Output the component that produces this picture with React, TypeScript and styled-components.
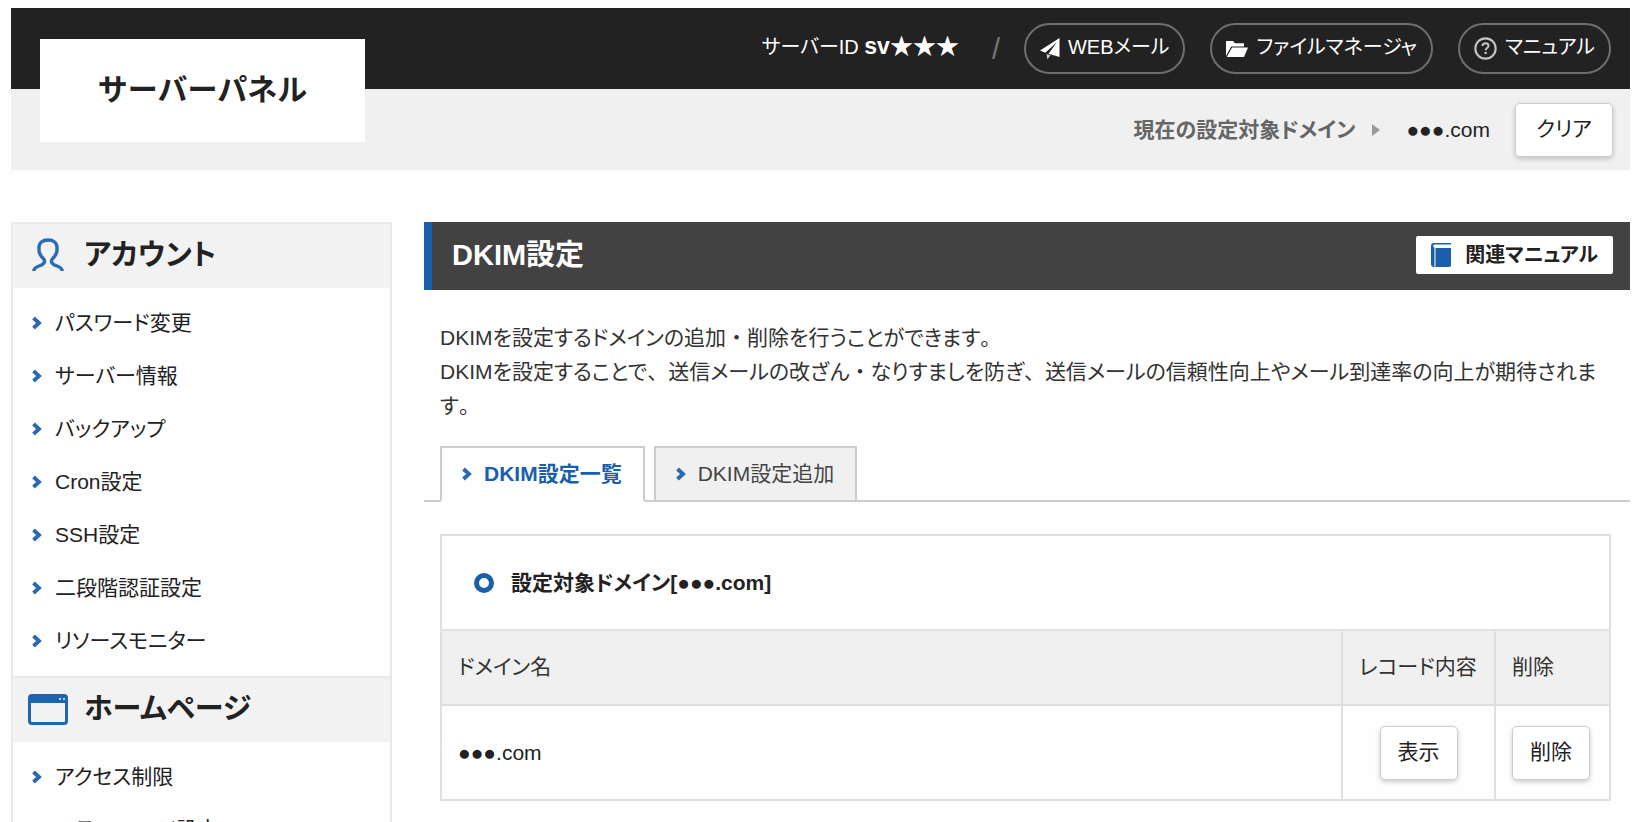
import React from "react";
import styled, { createGlobalStyle, css } from "styled-components";

const color = {
  ink: "#222222",
  text: "#333333",
  blue: "#1a5fac",
  bar: "#424242",
  panel: "#f0f0f0",
  line: "#e0e0e0",
};

const GlobalStyle = createGlobalStyle`
  *, *::before, *::after { box-sizing: border-box; }
  body {
    margin: 0;
    background: #fefefe;
    color: ${color.ink};
    font-family: "Liberation Sans", "Noto Sans CJK JP", sans-serif;
    font-size: 21px;
    line-height: 34px;
    font-feature-settings: "palt";
  }
  h1, h2, p, ul { margin: 0; padding: 0; font-size: inherit; }
  ul { list-style: none; }
  a { color: inherit; text-decoration: none; }
  button { font: inherit; color: inherit; cursor: pointer; }
  svg { display: block; flex: none; }
`;

const Page = styled.div`
  padding: 8px 10px 0 11px;
`;

const Header = styled.header`
  position: relative;
  margin-bottom: 52px;
`;

const Logo = styled.a`
  position: absolute;
  top: 31px;
  left: 29px;
  width: 325px;
  height: 103px;
  display: flex;
  align-items: center;
  justify-content: center;
  padding-bottom: 8px;
  background: #ffffff;
  font-family: "Noto Sans CJK JP", sans-serif;
  font-size: 30px;
  font-weight: 700;
  font-feature-settings: normal;
`;

const TopBar = styled.div`
  display: flex;
  align-items: center;
  justify-content: flex-end;
  height: 81px;
  padding-right: 19px;
  background: ${color.ink};
  color: #ffffff;
  font-size: 20px;
`;

const ServerId = styled.p`
  padding-bottom: 4px;

  strong { font-size: 23px; }
`;

const Slash = styled.span`
  margin: 0 24px 0 33px;
  color: #777777;
  font-size: 29px;
`;

const Pills = styled.nav`
  display: flex;
  gap: 25px;
`;

const Pill = styled.a`
  display: flex;
  align-items: center;
  gap: 8px;
  height: 51px;
  padding: 0 14px 4px;
  border: 2px solid #6e6e6e;
  border-radius: 26px;

  svg { margin-top: 4px; }
`;

const DomainBar = styled.div`
  display: flex;
  align-items: center;
  justify-content: flex-end;
  height: 81px;
  padding: 0 17px 0 0;
  background: ${color.panel};
`;

const DomainLabel = styled.span`
  color: #666666;
  font-weight: 700;
`;

const Triangle = styled.span`
  margin: 0 26px 0 17px;
  border: 6px solid transparent;
  border-left: 8px solid #999999;
  border-right: 0;
`;

const Button = styled.button<{ $wide?: boolean }>`
  height: 54px;
  padding: 0 17px 2px;
  ${(p) => p.$wide && css`
    min-width: 98px;
    margin-left: 25px;
  `}
  border: 1px solid #cccccc;
  border-radius: 5px;
  background: #ffffff;
  box-shadow: 0 2px 5px rgba(0, 0, 0, 0.2);
`;

const Columns = styled.div`
  display: flex;
  align-items: flex-start;
  gap: 32px;
`;

const Sidebar = styled.nav`
  flex: none;
  width: 381px;
  border: 2px solid #e9e9e9;
  border-width: 0 2px 2px;
`;

const SideHeading = styled.h2`
  display: flex;
  align-items: center;
  height: 66px;
  padding: 0 15px 2px;
  border-top: 2px solid #e9e9e9;
  background: #f2f2f2;
  font-size: 29px;
`;

const HeadingIcon = styled.span`
  display: flex;
  justify-content: center;
  width: 40px;
  margin-right: 16px;
`;

const SideList = styled.ul`
  padding: 8px 0 9px;
`;

const SideLink = styled.a`
  display: flex;
  align-items: center;
  gap: 13px;
  height: 53px;
  padding-left: 19px;
`;

const Main = styled.main`
  flex: 1;
  min-width: 0;
`;

const TitleBar = styled.div`
  display: flex;
  align-items: center;
  justify-content: space-between;
  height: 68px;
  padding: 0 17px 2px 20px;
  border-left: 8px solid ${color.blue};
  background: ${color.bar};
`;

const Title = styled.h1`
  color: #ffffff;
  font-size: 29px;
`;

const ManualLink = styled.a`
  display: flex;
  align-items: center;
  gap: 14px;
  height: 38px;
  padding: 0 15px;
  border-radius: 2px;
  background: #ffffff;
  font-size: 20px;
  font-weight: 700;
`;

const Description = styled.p`
  padding: 31px 16px 23px;
  color: ${color.text};
`;

const FullWidth = styled.span`
  font-feature-settings: normal;
`;

const Tabs = styled.nav`
  display: flex;
  gap: 9px;
  padding-left: 16px;
  border-bottom: 2px solid #cccccc;
`;

const Tab = styled.a<{ $active?: boolean }>`
  display: flex;
  align-items: center;
  gap: 12px;
  height: 56px;
  margin-bottom: -2px;
  padding: 0 21px 0 20px;
  border: 2px solid #cccccc;
  background: ${color.panel};
  color: #444444;
  ${(p) => p.$active && css`
    border-bottom-color: #fefefe;
    background: #fefefe;
    color: ${color.blue};
    font-weight: 700;
  `}
`;

const TableWrap = styled.div`
  padding: 32px 19px 0 16px;
`;

const DomainTable = styled.table`
  width: 100%;
  border: 2px solid ${color.line};
  border-collapse: collapse;
  table-layout: fixed;
`;

const CaptionCell = styled.th`
  height: 95px;
  padding: 0 32px;
  text-align: left;
`;

const CaptionInner = styled.span`
  display: flex;
  align-items: center;
  gap: 17px;
`;

const Ring = styled.span`
  width: 20px;
  height: 20px;
  border: 5px solid ${color.blue};
  border-radius: 50%;
`;

const HeadCell = styled.th`
  height: 75px;
  padding: 0 16px 2px;
  border: 2px solid ${color.line};
  background: ${color.panel};
  color: ${color.text};
  font-weight: 400;
  text-align: left;
  white-space: nowrap;
`;

const Cell = styled.td<{ $center?: boolean }>`
  height: 95px;
  padding: 0 16px;
  border: 2px solid ${color.line};
  text-align: ${(p) => (p.$center ? "center" : "left")};
`;

const Chevron = () => (
  <svg width="10" height="14" viewBox="0 0 10 14" aria-hidden="true">
    <path d="M1.5 2l5.5 5-5.5 5" fill="none" stroke="#2a68b3" strokeWidth="3.8" />
  </svg>
);

const PlaneIcon = () => (
  <svg width="20" height="22" viewBox="0 0 20 22" aria-hidden="true">
    <path d="M19.500 0L0 12.500l5.300 2.300L17 4 8.500 15.800 19.500 19z" fill="#fff" />
    <path d="M6.500 16l.9 5.500 3.100-4.300z" fill="#ccc" />
  </svg>
);

const FolderIcon = () => (
  <svg width="22" height="18" viewBox="0 0 22 18" aria-hidden="true">
    <path d="M0 16V1h7l2 2.200h9v3.300H5.200z" fill="#fff" />
    <path d="M6 7.500h16l-4 9.500H.8z" fill="#fff" />
  </svg>
);

const HelpIcon = () => (
  <svg width="23" height="23" viewBox="0 0 24 24" aria-hidden="true">
    <circle cx="12" cy="12" r="10.600" fill="none" stroke="#c4c4c4" strokeWidth="2.200" />
    <path d="M8.800 9.400c.2-1.900 1.400-2.800 3.200-2.800s3.200 1 3.200 2.600c0 2.200-3 2.300-3 4.600" fill="none" stroke="#c4c4c4" strokeWidth="2" />
    <rect x="11" y="15.500" width="2.300" height="2.300" fill="#c4c4c4" />
  </svg>
);

const PersonIcon = () => (
  <svg width="32" height="34" viewBox="0 0 32 34" aria-hidden="true">
    <path
      d="M1.800 33C2 30 4 29 7 28c6.500-2 6.500-5.500 3.800-8C8.500 17.500 7 15.500 7 12.500V9.500C7 5 10.500 2 16 2s9 3 9 7.500v3c0 3-1.500 5-3.800 7.500-2.700 2.500-2.700 6 3.800 8 3 1 5 2 5.200 5"
      fill="none"
      stroke="#2a6bb5"
      strokeWidth="3.400"
    />
  </svg>
);

const WindowIcon = () => (
  <svg width="40" height="31" viewBox="0 0 40 31" aria-hidden="true">
    <rect x="1.500" y="1.500" width="37" height="28" rx="2.500" fill="#f2f2f2" stroke="#1f64af" strokeWidth="3" />
    <path d="M1 2h38v7H1z" fill="#1f64af" />
    <path d="M31 5h2M35 5h2" stroke="#c5d6ea" strokeWidth="2" />
  </svg>
);

const BookIcon = () => (
  <svg width="20" height="24" viewBox="0 0 20 24" aria-hidden="true">
    <path d="M3 0h17v1.400H3.500C2 1.400 2 4.500 3.500 4.500V24H3c-2 0-3-1-3-3V3c0-2 1-3 3-3z" fill="#1a5fac" />
    <path d="M4.500 5H20v17c0 1.300-.7 2-2 2H4.500z" fill="#1a5fac" />
    <path d="M3.800 5v18" stroke="#8fb2d8" strokeWidth="1" />
  </svg>
);

/* Keeps Japanese punctuation at its full em width inside proportional text. */
const Prose = ({ text }: { text: string }) => (
  <>
    {text
      .split(/([、。・])/)
      .map((part, i) => (i % 2 ? <FullWidth key={i}>{part}</FullWidth> : part))}
  </>
);

const sections = [
  {
    title: "アカウント",
    icon: <PersonIcon />,
    items: [
      "パスワード変更",
      "サーバー情報",
      "バックアップ",
      "Cron設定",
      "SSH設定",
      "二段階認証設定",
      "リソースモニター",
    ],
  },
  {
    title: "ホームページ",
    icon: <WindowIcon />,
    items: ["アクセス制限", "エラーページ設定"],
  },
];

export default function App() {
  return (
    <>
      <GlobalStyle />
      <Page>
        <Header>
          <TopBar>
            <ServerId>
              サーバーID <strong>sv★★★</strong>
            </ServerId>
            <Slash>/</Slash>
            <Pills>
              <Pill href="#webmail">
                <PlaneIcon />
                WEBメール
              </Pill>
              <Pill href="#files">
                <FolderIcon />
                ファイルマネージャ
              </Pill>
              <Pill href="#manual">
                <HelpIcon />
                マニュアル
              </Pill>
            </Pills>
          </TopBar>
          <DomainBar>
            <DomainLabel>現在の設定対象ドメイン</DomainLabel>
            <Triangle />
            <span>●●●.com</span>
            <Button type="button" $wide>クリア</Button>
          </DomainBar>
          <Logo href="#top">サーバーパネル</Logo>
        </Header>
        <Columns>
          <Sidebar>
            {sections.map((section) => (
              <section key={section.title}>
                <SideHeading>
                  <HeadingIcon>{section.icon}</HeadingIcon>
                  {section.title}
                </SideHeading>
                <SideList>
                  {section.items.map((item) => (
                    <li key={item}>
                      <SideLink href="#">
                        <Chevron />
                        {item}
                      </SideLink>
                    </li>
                  ))}
                </SideList>
              </section>
            ))}
          </Sidebar>
          <Main>
            <TitleBar>
              <Title>DKIM設定</Title>
              <ManualLink href="#related">
                <BookIcon />
                関連マニュアル
              </ManualLink>
            </TitleBar>
            <Description>
              <Prose text="DKIMを設定するドメインの追加・削除を行うことができます。" />
              <br />
              <Prose text="DKIMを設定することで、送信メールの改ざん・なりすましを防ぎ、送信メールの信頼性向上やメール到達率の向上が期待されます。" />
            </Description>
            <Tabs>
              <Tab href="#list" $active>
                <Chevron />
                DKIM設定一覧
              </Tab>
              <Tab href="#add">
                <Chevron />
                DKIM設定追加
              </Tab>
            </Tabs>
            <TableWrap>
              <DomainTable>
                <colgroup>
                  <col />
                  <col width={153} />
                  <col width={115} />
                </colgroup>
                <thead>
                  <tr>
                    <CaptionCell colSpan={3}>
                      <CaptionInner>
                        <Ring />
                        設定対象ドメイン[●●●.com]
                      </CaptionInner>
                    </CaptionCell>
                  </tr>
                  <tr>
                    <HeadCell>ドメイン名</HeadCell>
                    <HeadCell>レコード内容</HeadCell>
                    <HeadCell>削除</HeadCell>
                  </tr>
                </thead>
                <tbody>
                  <tr>
                    <Cell>●●●.com</Cell>
                    <Cell $center>
                      <Button type="button">表示</Button>
                    </Cell>
                    <Cell>
                      <Button type="button">削除</Button>
                    </Cell>
                  </tr>
                </tbody>
              </DomainTable>
            </TableWrap>
          </Main>
        </Columns>
      </Page>
    </>
  );
}
